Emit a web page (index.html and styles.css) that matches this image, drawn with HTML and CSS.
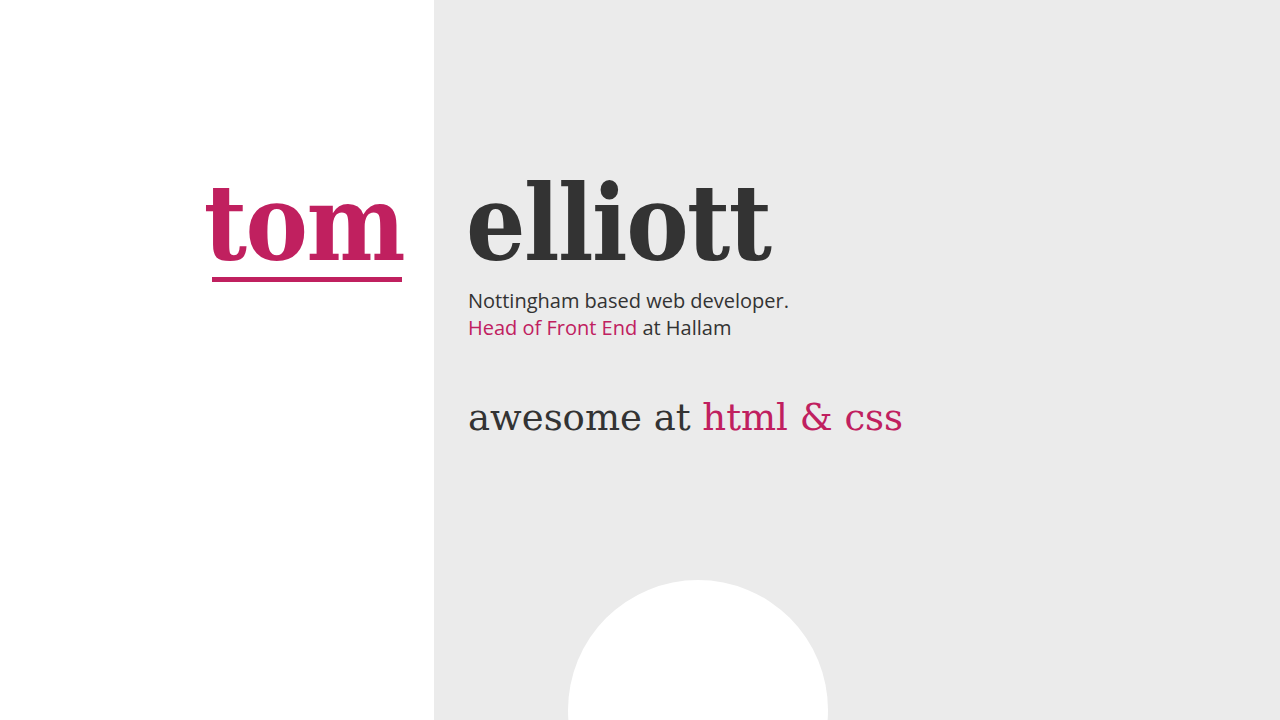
FILE: index.html
```html
<!DOCTYPE html>
<html lang="en">
<head>
<meta charset="utf-8">
<title>tom elliott</title>
<link rel="stylesheet" href="styles.css">
</head>
<body>
<div class="page">
  <div class="left">
    <h1 class="first"><span class="first-name">tom</span></h1>
  </div>
  <div class="right">
    <h1 class="last">elliott</h1>
    <p class="intro">Nottingham based web developer.<br><a class="accent" href="#">Head of Front End</a> at Hallam</p>
    <p class="skill">awesome at <span class="accent">html &amp; css</span></p>
    <div class="circle"></div>
  </div>
</div>
</body>
</html>
```
FILE: styles.css
```css
html, body {
  margin: 0;
  padding: 0;
  height: 100%;
}
body {
  background: #ebebeb;
  color: #333333;
  overflow: hidden;
}
.page {
  display: flex;
  height: 720px;
  overflow: hidden;
}
.left {
  width: 434px;
  flex: none;
  background: #ffffff;
  display: flex;
  justify-content: flex-end;
  padding-right: 30px;
  box-sizing: border-box;
}
.right {
  flex: 1;
  background: #ebebeb;
  padding-left: 32px;
  display: flex;
  flex-direction: column;
  align-items: flex-start;
}
h1 {
  margin: 0;
  padding-top: 164px;
  font-family: "DejaVu Serif", serif;
  font-stretch: condensed;
  font-weight: bold;
  font-size: 104px;
  line-height: 120px;
  letter-spacing: -1.5px;
}
.first {
  color: #c0205f;
}
.first-name {
  display: inline-block;
  position: relative;
  line-height: 120px;
}
.first-name::after {
  content: "";
  position: absolute;
  left: 8px;
  right: 2px;
  bottom: 2px;
  height: 5px;
  background: #c0205f;
}
.last {
  color: #333333;
}
.intro {
  margin: 3px 0 0 2px;
  font-family: "Open Sans", sans-serif;
  font-size: 20px;
  line-height: 27px;
  color: #333333;
}
.accent {
  color: #c0205f;
  text-decoration: none;
}
.skill {
  margin: 53px 0 0 2px;
  font-family: "DejaVu Serif", serif;
  font-size: 37px;
  line-height: 48px;
  color: #333333;
}
.circle {
  width: 260px;
  height: 260px;
  border-radius: 50%;
  background: #ffffff;
  margin: 138px 0 0 102px;
  flex: none;
}
```
